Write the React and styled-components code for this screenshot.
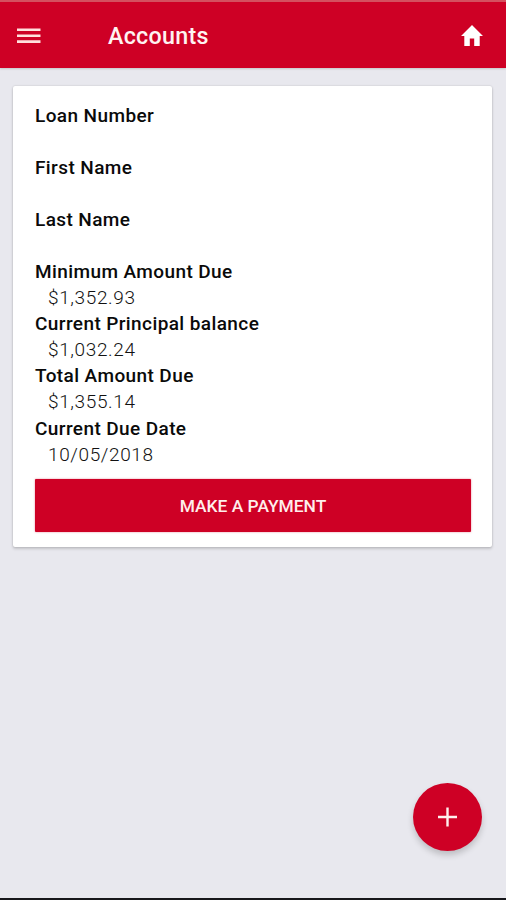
import React from 'react';
import styled, { createGlobalStyle } from 'styled-components';

const accountDetails = [
  { label: 'Loan Number', value: '' },
  { label: 'First Name', value: '' },
  { label: 'Last Name', value: '' },
  { label: 'Minimum Amount Due', value: '$1,352.93' },
  { label: 'Current Principal balance', value: '$1,032.24' },
  { label: 'Total Amount Due', value: '$1,355.14' },
  { label: 'Current Due Date', value: '10/05/2018' },
];

const App = () => {
  return (
    <Screen>
      <GlobalStyle />
      <Header>
        <MenuButton aria-label="Menu">
          <svg width="24" height="16" viewBox="0 0 24 16">
            <path d="M0 0.5h23.5v2.6H0zM0 6.4h23.5v2.6H0zM0 12.3h23.5v2.6H0z" fill="#ffe0dd" />
          </svg>
        </MenuButton>
        <Title>Accounts</Title>
        <HomeButton aria-label="Home">
          <svg width="22" height="21" viewBox="2 3 20 17" preserveAspectRatio="none">
            <path d="M10 20v-6h4v6h5v-8h3L12 3 2 12h3v8z" fill="#ffffff" />
          </svg>
        </HomeButton>
      </Header>
      <Content>
        <Card>
          <Details>
            {accountDetails.map(({ label, value }) => (
              <Detail key={label}>
                <Label>{label}</Label>
                <Value>{value}</Value>
              </Detail>
            ))}
          </Details>
          <PaymentButton>MAKE A PAYMENT</PaymentButton>
        </Card>
      </Content>
      <AddButton aria-label="Add">
        <svg width="20" height="20" viewBox="0 0 20 20">
          <path d="M8.3 0.5h2.4v8.3h8.3v2.4h-8.3v8.3H8.3v-8.3H0V8.8h8.3z" fill="#fff0ee" />
        </svg>
      </AddButton>
    </Screen>
  );
};

const GlobalStyle = createGlobalStyle`
  * {
    box-sizing: border-box;
  }

  body {
    margin: 0;
    font-family: Roboto, sans-serif;
  }

  button {
    border: 0;
    padding: 0;
    font-family: inherit;
  }
`;

const Screen = styled.div`
  background-color: #e8e8ee;
  border-bottom: 2px solid #17171b;
  display: flex;
  flex-direction: column;
  height: 900px;
  position: relative;
  width: 506px;
`;

const Header = styled.header`
  align-items: center;
  background-color: #ce0025;
  border-top: 2px solid #d4505f;
  box-shadow: 0 1px 2px #00000028;
  display: flex;
  flex-shrink: 0;
  height: 68px;
  padding: 2px 23px 0 17px;
`;

const IconButton = styled.button`
  background: none;
  display: flex;
`;

const MenuButton = styled(IconButton)`
  width: 24px;
`;

const HomeButton = styled(IconButton)`
  margin: 0 0 1px auto;
`;

const Title = styled.h1`
  color: #fff3f1;
  font-size: 23.3px;
  font-weight: 500;
  letter-spacing: 0.25px;
  line-height: 28px;
  margin: 0 0 1px 67px;
`;

const Content = styled.main`
  padding: 18px 14px 0 13px;
`;

const Card = styled.section`
  background-color: #ffffff;
  border-radius: 2px;
  box-shadow: 0 0 2px #00000030, 0 2px 3px #00000028;
  height: 461px;
  padding: 17px 21px 15px 22px;
`;

const Details = styled.dl`
  margin: 0;
`;

const Detail = styled.div`
  height: 52.1px;
`;

const Label = styled.dt`
  color: #0a0a0a;
  font-size: 19px;
  font-weight: 500;
  letter-spacing: 0.4px;
  line-height: 26px;
`;

const Value = styled.dd`
  color: #111111;
  font-size: 19px;
  font-weight: 300;
  letter-spacing: 0.62px;
  line-height: 26px;
  margin: 0 0 0 13px;
`;

const PaymentButton = styled.button`
  background-color: #ce0025;
  border-radius: 1px;
  box-shadow: 0 0 2px #ce002580;
  color: #ffeeec;
  display: block;
  font-size: 17.4px;
  font-weight: 500;
  height: 53px;
  line-height: 24px;
  margin-top: 11.3px;
  padding-top: 1px;
  width: 100%;
`;

/* floats over the page, above the bottom edge */
const AddButton = styled.button`
  align-items: center;
  background-color: #ce0025;
  border-radius: 50%;
  bottom: 47px;
  box-shadow: 0 4px 6px #00000030;
  display: flex;
  height: 68px;
  justify-content: center;
  position: absolute;
  right: 24px;
  width: 69px;
`;

export default App;
